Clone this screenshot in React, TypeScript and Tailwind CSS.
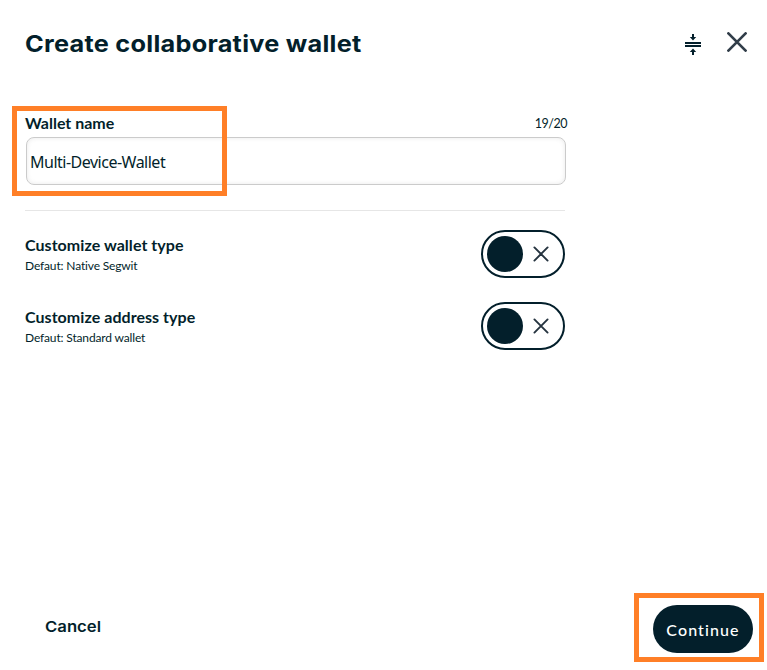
function Cross({ size, width, color }: { size: number; width: number; color: string }) {
  return (
    <svg width={size} height={size} viewBox={`0 0 ${size} ${size}`} fill="none" stroke={color} strokeWidth={width} strokeLinecap="round" className="block shrink-0">
      <path d={`M1.4 1.4 L${size - 1.4} ${size - 1.4} M${size - 1.4} 1.4 L1.4 ${size - 1.4}`} />
    </svg>
  );
}

function CollapseIcon() {
  return (
    <svg width="16" height="22" viewBox="0 0 16 22" className="block" fill="#031f2b">
      <path d="M7 0h2v3h2.200L8 6.600 4.800 3H7zM0 8h16v2H0zM0 11h16v2H0zM8 14.400l3.200 3.600H9v3H7v-3H4.800z" />
    </svg>
  );
}

function Setting({ title, note }: { title: string; note: string }) {
  return (
    <div className="flex h-12 items-start justify-between">
      <div className="pt-[5px]">
        <div className="text-[16px] leading-5 font-bold tracking-[0.05px] whitespace-nowrap">{title}</div>
        <div className="mt-[3px] text-[12px] leading-4 tracking-[-0.15px] whitespace-nowrap">{note}</div>
      </div>
      <button type="button" role="switch" aria-checked="false" aria-label={title} className="mr-px flex h-12 w-[84px] items-center rounded-full border-2 border-[#031f2b] pl-1">
        <span className="mr-[10px] size-9 rounded-full bg-[#031f2b]" />
        <Cross size={16} width={1.9} color="#25333f" />
      </button>
    </div>
  );
}

export default function App() {
  return (
    <div className="relative flex h-[670px] w-[767px] flex-col overflow-hidden bg-white font-['Lato',sans-serif] text-[#031f2b]">
      <header className="flex h-[106px] items-start justify-between pr-[20px] pl-[25px]">
        <h1 className="mt-7 origin-left scale-x-[1.1] font-['Inter',sans-serif] text-[23px] leading-8 font-bold whitespace-nowrap tracking-[0.24px]">Create collaborative wallet</h1>
        <div className="mt-[32px] flex items-start gap-[26px]">
          <button type="button" aria-label="Collapse" className="mt-[2px]"><CollapseIcon /></button>
          <button type="button" aria-label="Close"><Cross size={20} width={2.7} color="#313d49" /></button>
        </div>
      </header>
      <main className="ml-[25px] w-[541px] flex-1">
        <div className="flex h-[31px] items-start justify-between pt-[7px]">
          <label htmlFor="wallet-name" className="text-[16px] leading-5 font-bold">Wallet name</label>
          <span className="-mr-[1px] mt-[3px] text-[12.5px] leading-4 tracking-[-0.5px]">19/20</span>
        </div>
        <input id="wallet-name" defaultValue="Multi-Device-Wallet" className="ml-[1px] block h-12 w-[540px] rounded-lg border border-[#cbcbcb] bg-white pt-px pr-1 pl-[3px] font-['Noto_Sans',sans-serif] text-[16px] tracking-[-0.5px] shadow-[inset_0_0_5px_rgba(0,0,0,0.09)] outline-none" />
        <div className="mt-[25px] h-px w-[540px] bg-[#e6e6e6]" />
        <div className="mt-[19px] flex flex-col gap-6">
          <Setting title="Customize wallet type" note="Defaut: Native Segwit" />
          <Setting title="Customize address type" note="Defaut: Standard wallet" />
        </div>
      </main>
      <footer className="flex h-[65px] items-start justify-between pr-[14px] pl-[45px]">
        <button type="button" className="mt-[10px] origin-left scale-x-[1.1] font-['Inter',sans-serif] text-[15.2px] leading-6 font-semibold">Cancel</button>
        <button type="button" className="h-12 w-[100px] rounded-full bg-[#031f2b] pt-px text-[16px] font-medium tracking-[1.1px] text-white">Continue</button>
      </footer>
      <div className="pointer-events-none absolute top-[106px] left-3 h-[90px] w-[215px] border-[5px] border-[#ff7f27]" />
      <div className="pointer-events-none absolute top-[593px] left-[634px] h-[69px] w-[130px] border-[5px] border-[#ff7f27]" />
    </div>
  );
}
